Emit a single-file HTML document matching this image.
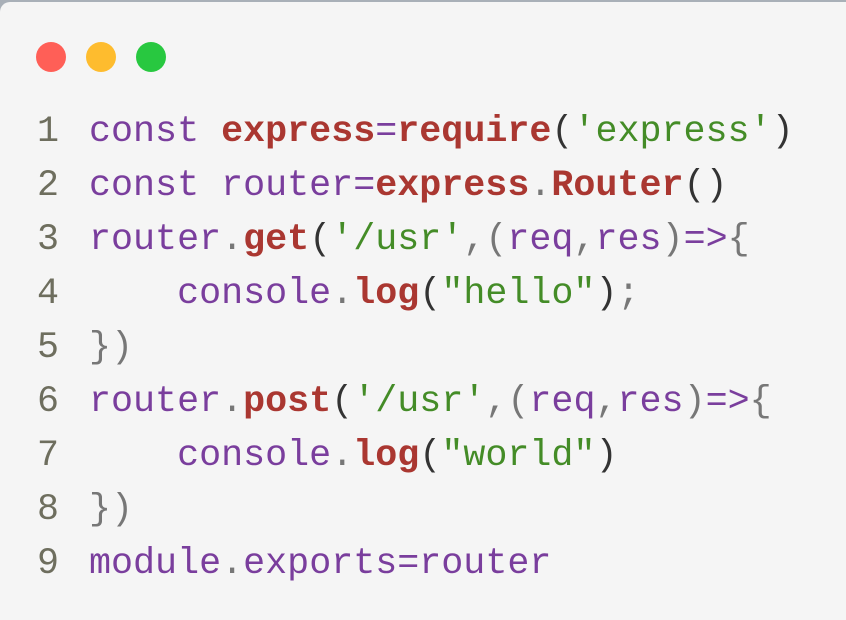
<!DOCTYPE html>
<html><head><meta charset="utf-8"><style>
html,body{margin:0;padding:0;width:846px;height:620px;overflow:hidden;background:#a9b0b8;}
.win{position:absolute;left:0;top:2px;width:846px;height:618px;background:#f5f5f5;border-top-left-radius:10px;}
.dot{position:absolute;top:40px;width:30px;height:30px;border-radius:50%;}
pre{position:absolute;left:0;top:103px;margin:0;font-family:"Liberation Mono",monospace;font-size:36.7px;line-height:54px;color:#333;}
.l{display:block;white-space:pre;}
.n{display:inline-block;width:89px;padding-left:37px;box-sizing:border-box;color:#6e6e5e;}
.k{color:#7a3e9d}.f{color:#aa3731;font-weight:bold}.s{color:#448c27}.g{color:#777}.d{color:#333}
</style></head><body>
<div class="win">
<div class="dot" style="left:36px;background:#ff5f57"></div>
<div class="dot" style="left:86px;background:#febc2e"></div>
<div class="dot" style="left:136px;background:#28c840"></div>
<pre><span class="l"><span class="n">1</span><span class="k">const </span><span class="f">express</span><span class="k">=</span><span class="f">require</span><span class="d">(</span><span class="s">'express'</span><span class="d">)</span></span><span class="l"><span class="n">2</span><span class="k">const router=</span><span class="f">express</span><span class="g">.</span><span class="f">Router</span><span class="d">()</span></span><span class="l"><span class="n">3</span><span class="k">router</span><span class="g">.</span><span class="f">get</span><span class="d">(</span><span class="s">'/usr'</span><span class="g">,(</span><span class="k">req</span><span class="g">,</span><span class="k">res</span><span class="g">)</span><span class="k">=&gt;</span><span class="g">{</span></span><span class="l"><span class="n">4</span>    <span class="k">console</span><span class="g">.</span><span class="f">log</span><span class="d">(</span><span class="s">"hello"</span><span class="d">)</span><span class="g">;</span></span><span class="l"><span class="n">5</span><span class="g">})</span></span><span class="l"><span class="n">6</span><span class="k">router</span><span class="g">.</span><span class="f">post</span><span class="d">(</span><span class="s">'/usr'</span><span class="g">,(</span><span class="k">req</span><span class="g">,</span><span class="k">res</span><span class="g">)</span><span class="k">=&gt;</span><span class="g">{</span></span><span class="l"><span class="n">7</span>    <span class="k">console</span><span class="g">.</span><span class="f">log</span><span class="d">(</span><span class="s">"world"</span><span class="d">)</span></span><span class="l"><span class="n">8</span><span class="g">})</span></span><span class="l"><span class="n">9</span><span class="k">module</span><span class="g">.</span><span class="k">exports=router</span></span></pre>
</div>
</body></html>
